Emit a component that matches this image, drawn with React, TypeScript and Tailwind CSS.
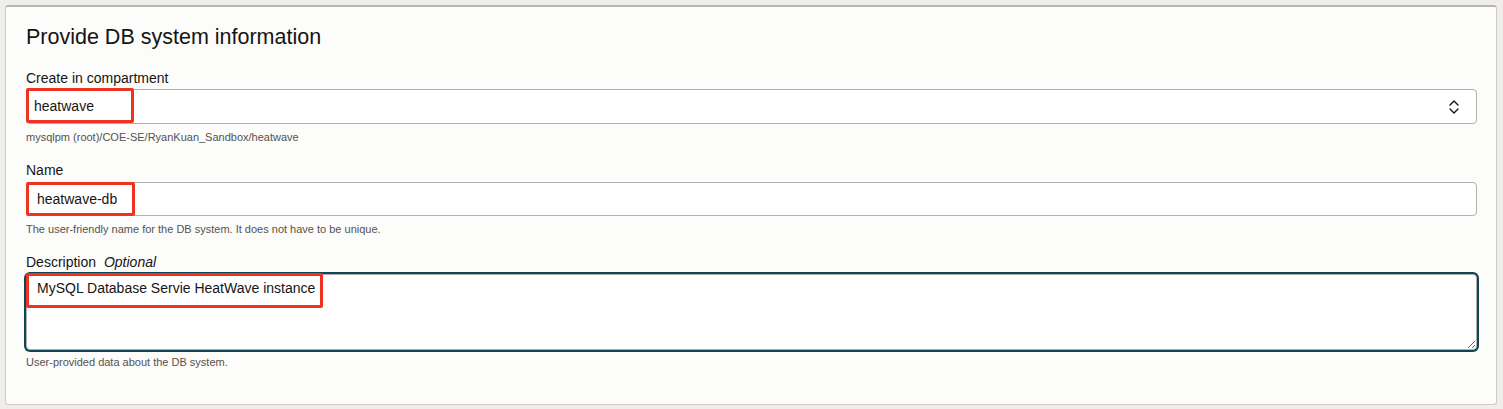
import React from "react";

const font = { fontFamily: '"Liberation Sans", Arial, Helvetica, sans-serif' };

function Highlight({ className }: { className: string }) {
  // red annotation box drawn over the field
  return (
    <div
      className={
        "pointer-events-none absolute border-[3px] border-[#ee3320] rounded-[2px] " +
        className
      }
    />
  );
}

function Chevrons() {
  return (
    <svg width="12" height="16" viewBox="0 0 12 16" fill="none" stroke="#161513" strokeWidth="1.4" strokeLinecap="round" strokeLinejoin="round">
      <path d="M2 6 L6 2 L10 6" />
      <path d="M2 10 L6 14 L10 10" />
    </svg>
  );
}

export default function App() {
  return (
    <div className="w-[1503px] h-[409px] bg-[#efeeed] pt-[5px] pl-[5px]" style={font}>
      <section className="w-[1492px] h-[400px] bg-[#fcfcfb] border border-[#cfcbc7] border-t-2 border-t-[#b9b5b1] rounded-[3px] pl-[20px] pr-[19px] pt-[18px] text-[#161513]">
        <h2 className="text-[21.5px] leading-[24px]">Provide DB system information</h2>

        {/* Compartment */}
        <label className="block mt-[20px] text-[14px] leading-[18px]">Create in compartment</label>
        <div className="relative mt-[2px]">
          <div className="h-[35px] border border-[#b4afaa] rounded-[4px] bg-white flex items-center justify-between pl-[7px] pr-[16px]">
            <span className="text-[14px]">heatwave</span>
            <Chevrons />
          </div>
          <Highlight className="left-0 -top-[1px] w-[108px] h-[35px]" />
        </div>
        <p className="mt-[6px] text-[11px] leading-[14px] text-[#57524d]">
          mysqlpm (root)/COE-SE/RyanKuan_Sandbox/heatwave
        </p>

        {/* Name */}
        <label className="block mt-[17px] text-[14px] leading-[18px]">Name</label>
        <div className="relative mt-[3px]">
          <div className="h-[34px] border border-[#b4afaa] rounded-[4px] bg-white flex items-center pl-[10px]">
            <span className="text-[14px]">heatwave-db</span>
          </div>
          <Highlight className="left-0 top-0 w-[109px] h-[34px]" />
        </div>
        <p className="mt-[6px] text-[11px] leading-[14px] text-[#57524d]">
          The user-friendly name for the DB system. It does not have to be unique.
        </p>

        {/* Description */}
        <label className="block mt-[17px] text-[14px] leading-[18px]">
          Description <span className="italic ml-[4px]">Optional</span>
        </label>
        <div className="relative mt-[3px]">
          <textarea
            className="block w-full h-[76px] border border-[#b4afaa] rounded-[4px] bg-white ring-2 ring-[#0e4656] outline-none resize-y pl-[10px] pt-[4px] text-[14px] leading-[18px] text-[#161513]"
            defaultValue="MySQL Database Servie HeatWave instance"
            style={font}
          />
          <Highlight className="left-0 -top-[1px] w-[297px] h-[35px]" />
        </div>
        <p className="mt-[5px] text-[11px] leading-[14px] text-[#57524d]">
          User-provided data about the DB system.
        </p>
      </section>
    </div>
  );
}
